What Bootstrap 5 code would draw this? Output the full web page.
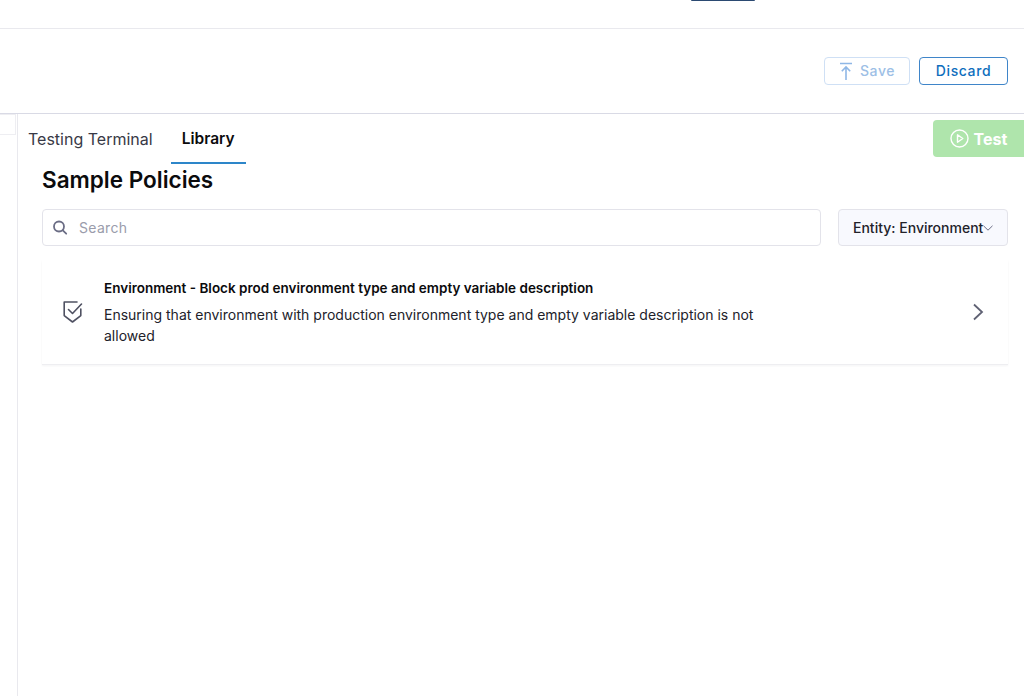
<!DOCTYPE html>
<html lang="en">
<head>
<meta charset="utf-8">
<title>Sample Policies</title>
<link href="https://cdn.jsdelivr.net/npm/bootstrap@5.3.0/dist/css/bootstrap.min.css" rel="stylesheet">
<style>
html,body{height:696px;overflow:hidden;background:#fff;}
body{font-family:Inter,"Liberation Sans",sans-serif;color:#0b0b0d;}
.top-strip{height:29px;border-bottom:1px solid #e9e9ee;}
.top-pill{width:64px;height:1px;background:#2b4a72;border-radius:0 0 3px 3px;margin-left:691px;}
.tool-strip{height:85px;border-bottom:1px solid #d9dae5;padding:28px 16px 0 0;gap:9px;}
.act-btn{height:28px;font-size:14px;font-weight:500;letter-spacing:.6px;border-radius:4px;padding:0;line-height:1;background:#fff;display:flex;align-items:center;justify-content:center;}
.save-btn{width:86px;border:1px solid #cfe0f5;color:#9dbfe6;gap:7px;}
.discard-btn{width:89px;border:1px solid #3f85c9;color:#0f6ebd;}
.work-area{height:582px;}
.left-rail{width:18px;border-right:1px solid #e9e9ee;flex:none;}
.rail-box{width:16px;height:21px;border:1px solid #eeeef2;border-left:0;background:#fff;}
.main-pane{flex:1;min-width:0;}
.tab-row{height:50px;}
.tab-item{font-size:16px;line-height:20px;padding:15px 10px 14px;color:#383946;font-weight:400;}
.tab-first{padding-left:10px;padding-right:18px;}
.tab-live{color:#0b0b0d;font-weight:600;font-size:15.5px;border-bottom:2px solid #2d86c9;width:75px;text-align:center;padding-left:0;padding-right:0;}
.test-btn{width:91px;height:37px;margin-top:6px;background:#afe5ac;color:#fff;border-radius:4px 0 0 4px;font-size:16px;font-weight:700;gap:5px;}
.page-title{font-size:22.5px;font-weight:600;line-height:30px;margin:1px 0 0 24px;letter-spacing:0;color:#0b0b0d;}
.filter-row{margin:14px 16px 0 24px;gap:17px;}
.search-shell{flex:1;height:37px;border:1px solid #e3e3ea;border-radius:4px;padding-left:9px;gap:11px;}
.search-txt{font-size:14px;color:#9a9cab;letter-spacing:.3px;}
.entity-btn{width:170px;height:37px;background:#f8f9fe;border:1px solid #e3e3ea;border-radius:4px;font-size:14px;font-weight:500;padding-left:14px;color:#22222a;}
.policy-row{margin:14px 16px 0 24px;height:105px;border-bottom:1px solid #eeeef1;box-shadow:0 1px 2px rgba(30,30,50,.05);padding-left:20px;padding-right:24px;}
.policy-body{width:672px;margin-left:21px;}
.policy-name{font-size:13.5px;font-weight:600;line-height:20px;color:#0b0b0d;}
.policy-desc{font-size:14px;line-height:21px;margin-top:6px;color:#22222a;}
</style>
</head>
<body>
<div class="top-strip"><div class="top-pill"></div></div>
<div class="tool-strip d-flex justify-content-end">
  <button type="button" class="act-btn save-btn">
    <svg width="14" height="19" viewBox="0 0 14 19" fill="none" stroke="#8fb7e6" stroke-width="1.6"><path d="M1 1.5h12M7 18V5M2.8 9.2 7 5l4.2 4.2"/></svg>
    <span>Save</span>
  </button>
  <button type="button" class="act-btn discard-btn">Discard</button>
</div>
<div class="work-area d-flex">
  <div class="left-rail"><div class="rail-box"></div></div>
  <div class="main-pane d-flex flex-column">
    <div class="tab-row d-flex">
      <div class="tab-item tab-first">Testing Terminal</div>
      <div class="tab-item tab-live">Library</div>
      <div class="test-btn ms-auto d-flex align-items-center justify-content-center">
        <svg width="19" height="19" viewBox="0 0 19 19" fill="none" stroke="#fff" stroke-width="1.4"><circle cx="9.5" cy="9.5" r="8.5"/><path d="M7.5 5.8v7.4l5.3-3.7z" stroke-linejoin="round"/></svg>
        <span>Test</span>
      </div>
    </div>
    <h1 class="page-title">Sample Policies</h1>
    <div class="filter-row d-flex">
      <div class="search-shell d-flex align-items-center">
        <svg width="16" height="16" viewBox="0 0 16 16" fill="none" stroke="#6b6d85" stroke-width="1.8"><circle cx="7" cy="6.5" r="5"/><path d="m10.8 10.3 3.4 3.4" stroke-linecap="round"/></svg>
        <span class="search-txt">Search</span>
      </div>
      <div class="entity-btn d-flex align-items-center">
        <span>Entity: Environment</span>
        <svg width="10" height="6" viewBox="0 0 10 6" fill="none" stroke="#6b6d85" stroke-width="1"><path d="m.5.8 4.5 4.4L9.5.8"/></svg>
      </div>
    </div>
    <div class="policy-row d-flex align-items-center">
      <svg width="21" height="24" viewBox="0 0 21 24" fill="none" stroke="#4f5162" stroke-width="1.6" stroke-linecap="round" stroke-linejoin="round" class="flex-none"><path d="M15 2H2.2v13.6L10.5 22l8.3-6.4V9"/><path d="m6.5 9.5 4 4L19.5 4"/></svg>
      <div class="policy-body">
        <div class="policy-name">Environment - Block prod environment type and empty variable description</div>
        <div class="policy-desc">Ensuring that environment with production environment type and empty variable description is not allowed</div>
      </div>
      <svg class="ms-auto" width="12" height="18" viewBox="0 0 12 18" fill="none" stroke="#5f6173" stroke-width="1.8"><path d="m2 1.5 8 7.5-8 7.5"/></svg>
    </div>
  </div>
</div>
<script src="https://cdn.jsdelivr.net/npm/bootstrap@5.3.0/dist/js/bootstrap.bundle.min.js"></script>
</body>
</html>
